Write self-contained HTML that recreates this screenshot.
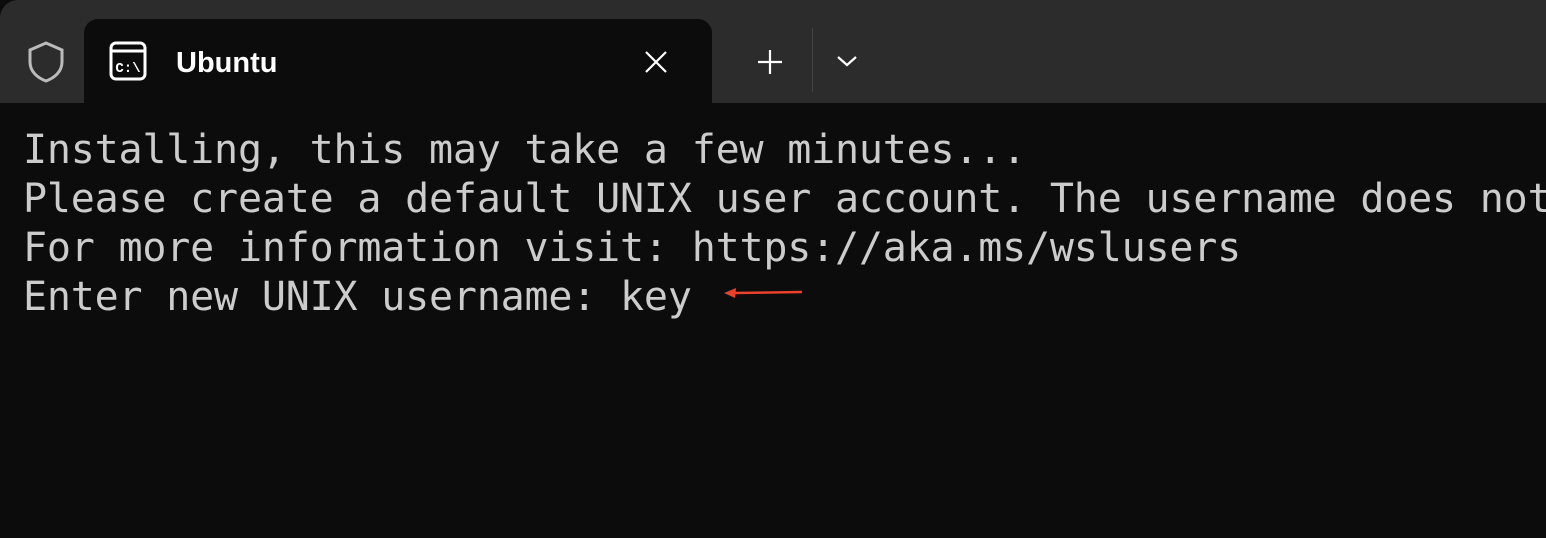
<!DOCTYPE html>
<html><head><style>
html,body{margin:0;padding:0;width:1546px;height:538px;overflow:hidden;background:#0c0c0c}
.bar{position:absolute;left:0;top:0;width:1546px;height:103px;background:#2c2c2c;border-top-left-radius:18px}
.tab{position:absolute;left:84px;top:19px;width:628px;height:90px;background:#0c0c0c;border-radius:14px 14px 0 0}
.title{position:absolute;left:176px;top:47px;font:600 29px "Liberation Sans",sans-serif;color:#fff}
.term{position:absolute;left:23px;top:126px;font:40px/49px "DejaVu Sans Mono","Liberation Mono",monospace;color:#cccccc;white-space:pre;letter-spacing:-0.2px}
.sep{position:absolute;left:812px;top:28px;width:1px;height:64px;background:#444}
</style></head><body>
<div class="bar"></div>
<div class="tab"></div>
<svg style="position:absolute;left:26px;top:40px" width="40" height="44" viewBox="0 0 40 44"><path d="M20 3 L36 10 V22 C36 32 28 38 20 41 C12 38 4 32 4 22 V10 Z" fill="none" stroke="#bbb" stroke-width="3"/></svg>
<svg style="position:absolute;left:108px;top:40px" width="42" height="42" viewBox="0 0 42 42"><rect x="3" y="3" width="34" height="36" rx="5" fill="none" stroke="#fff" stroke-width="3"/><line x1="3" y1="11" x2="37" y2="11" stroke="#fff" stroke-width="3"/><text x="20" y="32" font-family="Liberation Mono,monospace" font-size="14" font-weight="bold" fill="#fff" text-anchor="middle">C:\</text></svg>
<div class="title">Ubuntu</div>
<svg style="position:absolute;left:644px;top:50px" width="24" height="24" viewBox="0 0 24 24"><path d="M2 2 L22 22 M22 2 L2 22" stroke="#fff" stroke-width="2.2"/></svg>
<svg style="position:absolute;left:756px;top:48px" width="28" height="28" viewBox="0 0 28 28"><path d="M14 2 V26 M2 14 H26" stroke="#fff" stroke-width="2.2"/></svg>
<div class="sep"></div>
<svg style="position:absolute;left:836px;top:54px" width="22" height="14" viewBox="0 0 22 14"><path d="M2 3 L11 11 L20 3" fill="none" stroke="#fff" stroke-width="2.2"/></svg>
<div class="term">Installing, this may take a few minutes...
Please create a default UNIX user account. The username does not
For more information visit: https://aka.ms/wslusers
Enter new UNIX username: key</div>
<svg style="position:absolute;left:722px;top:286px" width="82" height="16" viewBox="0 0 82 16"><path d="M12 7 L80 6" stroke="#e8412c" stroke-width="2.5"/><path d="M2 7 L14 2 L13 12 Z" fill="#e8412c"/></svg>
</body></html>
